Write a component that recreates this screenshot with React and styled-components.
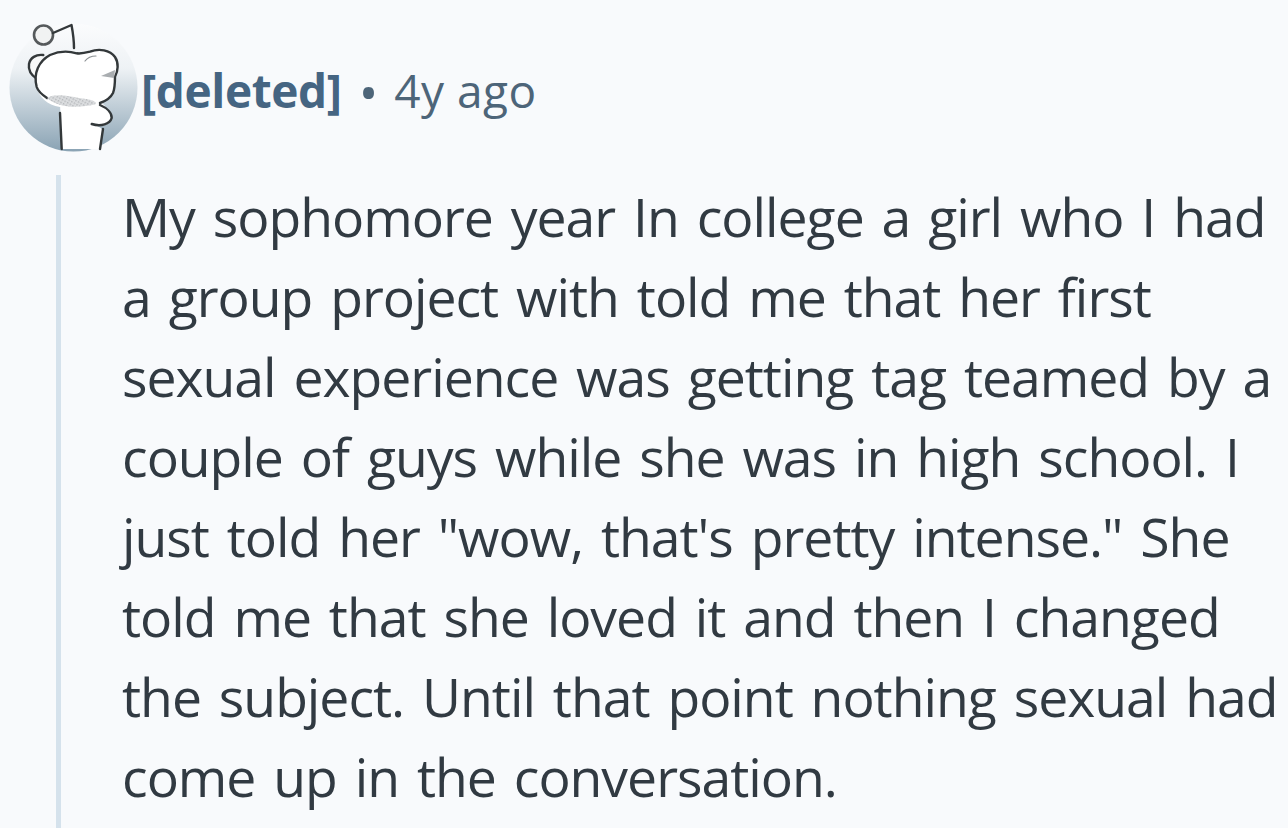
import React from "react";
import styled, { createGlobalStyle } from "styled-components";

const Global = createGlobalStyle`
  html, body { margin: 0; padding: 0; background: #f8fafc; overflow: hidden; }
`;

const Page = styled.div`
  width: 1288px;
  height: 828px;
  overflow: hidden;
  background: #f8fafc;
  font-family: "Open Sans", "Noto Sans", sans-serif;
`;

const Header = styled.header`
  display: flex;
  align-items: center;
  height: 128px;
  padding: 23px 0 0 9px;
`;

const Avatar = styled.svg`
  width: 129px;
  height: 129px;
  flex: none;
  overflow: visible;
  filter: blur(0.5px);
`;

const Meta = styled.div`
  display: flex;
  align-items: baseline;
  margin-left: 3px;
  margin-top: 6px;
  font-size: 46px;
  color: #4d6579;
`;

const Author = styled.span`
  font-weight: 700;
  color: #456582;
  letter-spacing: -0.4px;
`;

const Dot = styled.span`
  margin: 0 16px 0 17px;
  font-size: 52px;
  line-height: 0;
  transform: translateY(4px);
`;

const Time = styled.span`
  letter-spacing: 0.5px;
`;

const Thread = styled.section`
  margin: 24px 0 0 56px;
  height: 653px;
  border-left: 5px solid #d5e2ec;
  padding-left: 61px;
`;

const Body = styled.p`
  margin: 0;
  font-size: 53.5px;
  line-height: 80px;
  color: #313a42;
  letter-spacing: -1px;
  word-spacing: 5px;
  position: relative;
  top: 2px;
`;

const Line = styled.span`
  display: block;
  white-space: nowrap;
`;

const lines = [
  "My sophomore year In college a girl who I had",
  "a group project with told me that her first",
  "sexual experience was getting tag teamed by a",
  "couple of guys while she was in high school. I",
  "just told her \"wow, that's pretty intense.\" She",
  "told me that she loved it and then I changed",
  "the subject. Until that point nothing sexual had",
  "come up in the conversation.",
];

function Snoo() {
  return (
    <Avatar viewBox="0 0 129 129">
      <defs>
        <linearGradient id="bg" x1="0" y1="0" x2="0" y2="1">
          <stop offset="0" stopColor="#fbfcfd" />
          <stop offset="0.35" stopColor="#eef2f5" />
          <stop offset="1" stopColor="#8aa3b4" />
        </linearGradient>
        <pattern id="hatch" width="3" height="3" patternUnits="userSpaceOnUse" patternTransform="rotate(30)">
          <rect width="3" height="3" fill="#dcdee0" />
          <rect width="1.5" height="1.5" fill="#b4b7ba" />
        </pattern>
      </defs>
      <circle cx="64.5" cy="64.5" r="64" fill="url(#bg)" />
      <g stroke="#33383a" strokeWidth="2.4" strokeLinecap="round" strokeLinejoin="round">
        <path d="M51 80 L52.7 126 L91 126 C92 120 94 112 94 107 C90 103 86 102 82.7 102 C90 104 98 103 101 99 C104 94 100 86 91 78 Z" fill="#fff" stroke="none" />
        <path d="M51 90 L52.7 126 M91 82 C98 85 103 90 102.7 95 C101 101 92 104 82.7 101 M94 106 L91 126" fill="none" />
        <path d="M34.3 32 C27 31 21 35 20 41 C19 47 22 52 28 56" fill="#f7f8f8" />
        <path d="M27.7 64 C24 50 30 38 41 32 C50 28 60 28 67.7 30.3 C72 31 76 30 81 28.7 C90 25 101 27 106 34 C110 40 109 48 106 53.7 C106 60 106 65 104 70 C101 76 97 78 91 80 C80 85 62 86 51 84 C38 82 30 74 27.7 64 Z" fill="#fff" stroke="none" />
        <path d="M38 75 C32 71 29 68 27.7 64 C24 50 30 38 41 32 C50 28 60 28 67.7 30.3 C72 31 76 30 81 28.7 C90 25 101 27 106 34 C110 40 109 48 106 53.7 C106 60 106 65 104 70 C101 76 97 78 91 80" fill="none" />
        <circle cx="34.5" cy="12" r="9.5" fill="#f1f2f2" stroke="#55595b" strokeWidth="2.6" />
        <path d="M44 10 L62.5 2 C64 10 65 18 65 25" fill="none" />
        <path d="M76 38 C79 34 84 33 87 33" fill="none" strokeWidth="1.2" stroke="#8a8f92" />
      </g>
      <path d="M38 75 C46 70 60 73 70 75 C80 76 88 78 87 81 C72 85 50 86 38 75 Z" fill="url(#hatch)" />
      <path d="M92 53 L106 47 L105 55 Z" fill="#a9adb0" />
    </Avatar>
  );
}

export default function App() {
  return (
    <Page>
      <Global />
      <Header>
        <Snoo />
        <Meta>
          <Author>[deleted]</Author>
          <Dot>•</Dot>
          <Time>4y ago</Time>
        </Meta>
      </Header>
      <Thread>
        <Body>
          {lines.map((l) => (
            <Line key={l}>{l}</Line>
          ))}
        </Body>
      </Thread>
    </Page>
  );
}
